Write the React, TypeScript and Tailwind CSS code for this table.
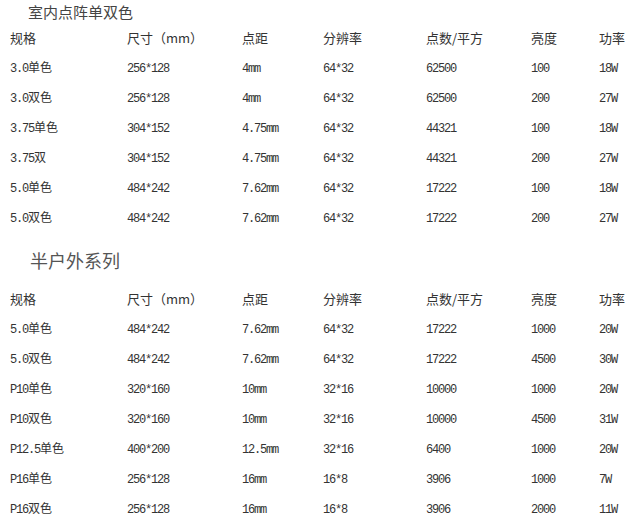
import React from "react";

const CJK = '"Noto Sans CJK SC", "Noto Sans CJK JP", sans-serif';

function Txt({ s }: { s: string }) {
  const parts = s.match(/[\x00-\x7f]+|[^\x00-\x7f]+/g) || [];
  return (
    <>
      {parts.map((p, i) =>
        /^[\x00-\x7f]+$/.test(p) ? (
          <span key={i} className="font-['Liberation_Mono',monospace] tracking-[-1.2px]">
            {p}
          </span>
        ) : (
          <span key={i} className="font-['Noto_Sans_CJK_SC','Noto_Sans_CJK_JP',sans-serif]">
            {p}
          </span>
        )
      )}
    </>
  );
}

const header = ["规格", "尺寸（mm）", "点距", "分辨率", "点数/平方", "亮度", "功率"];

const t1 = [
  ["3.0单色", "256*128", "4mm", "64*32", "62500", "100", "18W"],
  ["3.0双色", "256*128", "4mm", "64*32", "62500", "200", "27W"],
  ["3.75单色", "304*152", "4.75mm", "64*32", "44321", "100", "18W"],
  ["3.75双", "304*152", "4.75mm", "64*32", "44321", "200", "27W"],
  ["5.0单色", "484*242", "7.62mm", "64*32", "17222", "100", "18W"],
  ["5.0双色", "484*242", "7.62mm", "64*32", "17222", "200", "27W"],
];

const t2 = [
  ["5.0单色", "484*242", "7.62mm", "64*32", "17222", "1000", "20W"],
  ["5.0双色", "484*242", "7.62mm", "64*32", "17222", "4500", "30W"],
  ["P10单色", "320*160", "10mm", "32*16", "10000", "1000", "20W"],
  ["P10双色", "320*160", "10mm", "32*16", "10000", "4500", "31W"],
  ["P12.5单色", "400*200", "12.5mm", "32*16", "6400", "1000", "20W"],
  ["P16单色", "256*128", "16mm", "16*8", "3906", "1000", "7W"],
  ["P16双色", "256*128", "16mm", "16*8", "3906", "2000", "11W"],
];

function Table({ rows }: { rows: string[][] }) {
  return (
    <div className="pl-[10px]">
      <div className="grid grid-cols-[117px_115px_81px_103px_105px_68px_1fr] h-[30px] items-center text-[13px] text-[#333] font-['Noto_Sans_CJK_SC','Noto_Sans_CJK_JP',sans-serif]">
        {header.map((h, i) => (
          <div key={i} className="whitespace-nowrap">{h}</div>
        ))}
      </div>
      {rows.map((r, ri) => (
        <div
          key={ri}
          className="grid grid-cols-[117px_115px_81px_103px_105px_68px_1fr] h-[30px] items-center text-[12px] text-[#333]"
        >
          {r.map((c, ci) => (
            <div key={ci} className="whitespace-nowrap">
              <Txt s={c} />
            </div>
          ))}
        </div>
      ))}
    </div>
  );
}

export default function App() {
  return (
    <div className="w-[632px] h-[524px] bg-white overflow-hidden" style={{ fontFamily: CJK }}>
      <div className="h-[23px] flex items-center pl-[28px] text-[15px] text-[#444] leading-none">
        室内点阵单双色
      </div>
      <Table rows={t1} />
      <div className="h-[51px] flex items-center pl-[30px] pt-[3px] text-[18px] text-[#555] leading-none">
        半户外系列
      </div>
      <Table rows={t2} />
    </div>
  );
}
